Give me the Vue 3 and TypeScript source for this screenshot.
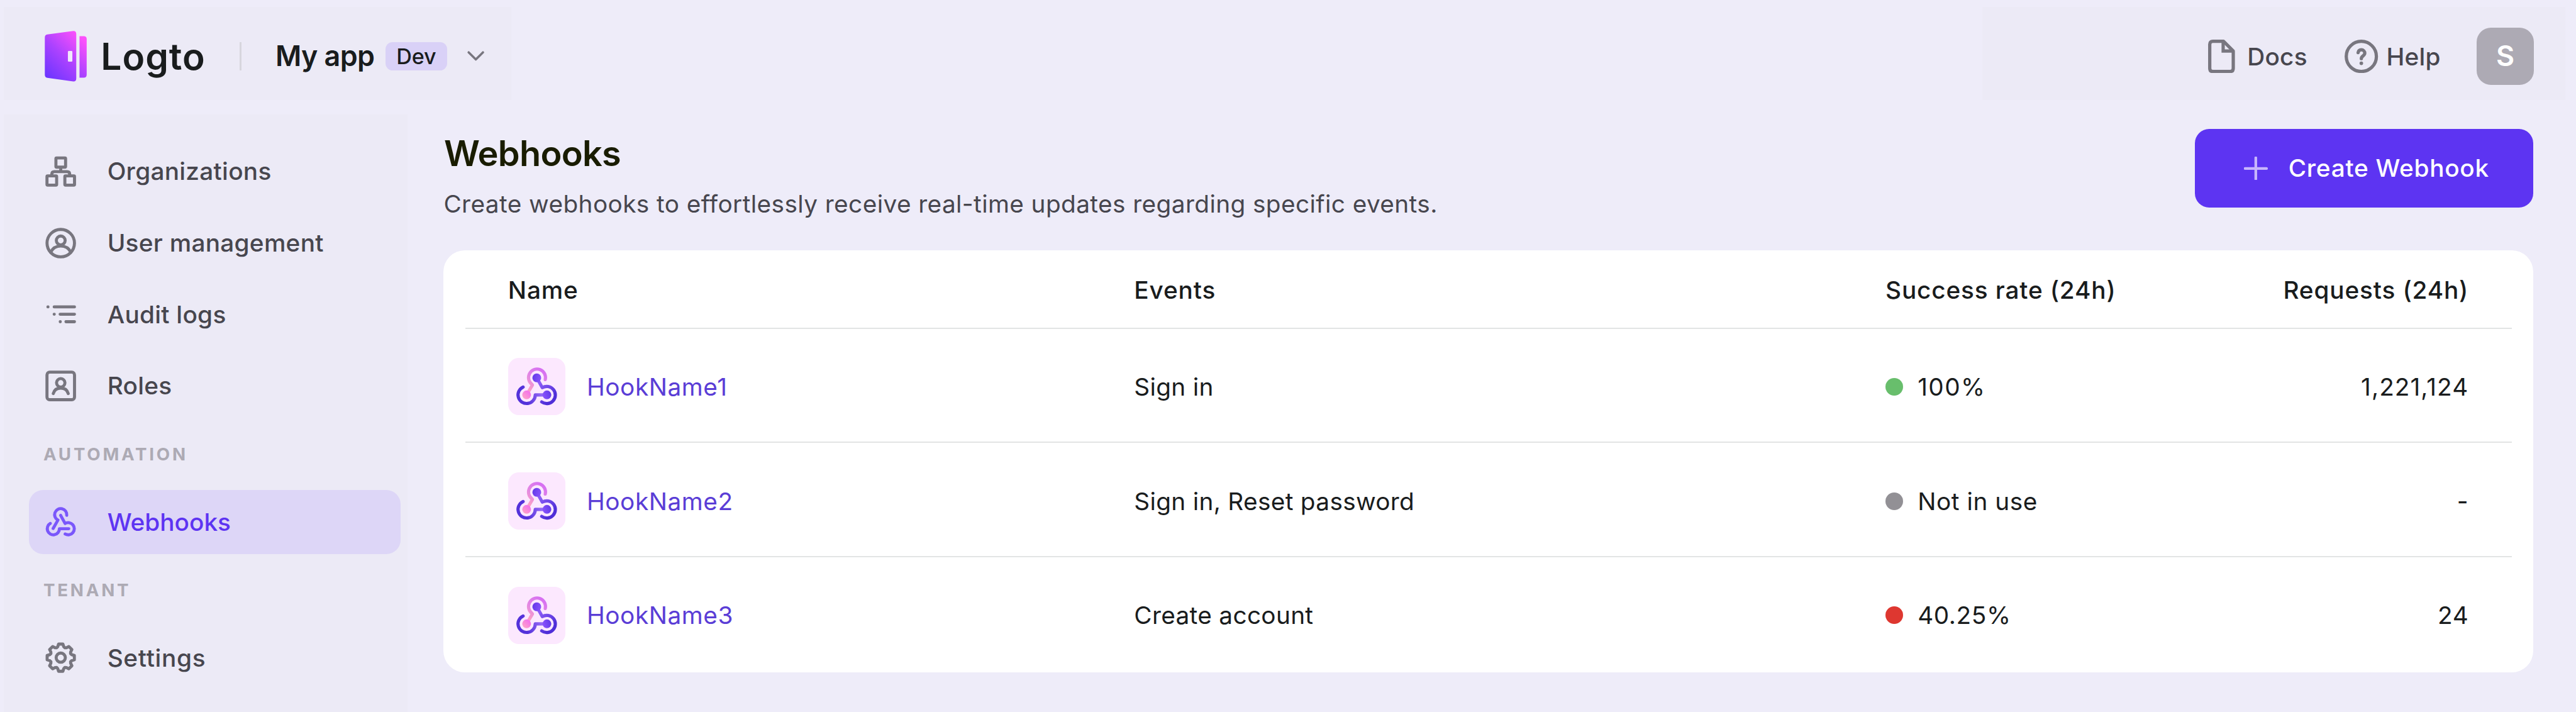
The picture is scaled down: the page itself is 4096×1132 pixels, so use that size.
<script setup lang="ts">
type IconName = 'org' | 'user' | 'logs' | 'role' | 'hook' | 'gear'

interface NavEntry {
  kind: 'item' | 'label'
  text: string
  icon?: IconName
  active?: boolean
  tone?: string
}

interface Hook {
  name: string
  events: string
  status: 'ok' | 'idle' | 'bad'
  rate: string
  requests: string
}

const nav: NavEntry[] = [
  { kind: 'item', text: 'Organizations', icon: 'org' },
  { kind: 'item', text: 'User management', icon: 'user' },
  { kind: 'item', text: 'Audit logs', icon: 'logs' },
  { kind: 'item', text: 'Roles', icon: 'role' },
  { kind: 'label', text: 'AUTOMATION' },
  { kind: 'item', text: 'Webhooks', icon: 'hook', active: true },
  { kind: 'label', text: 'TENANT' },
  { kind: 'item', text: 'Settings', icon: 'gear', tone: 'wide' },
]

const hooks: Hook[] = [
  { name: 'HookName1', events: 'Sign in', status: 'ok', rate: '100%', requests: '1,221,124' },
  { name: 'HookName2', events: 'Sign in, Reset password', status: 'idle', rate: 'Not in use', requests: '-' },
  { name: 'HookName3', events: 'Create account', status: 'bad', rate: '40.25%', requests: '24' },
]

// Eight-tooth gear outline around (36, 36)
const gearPath = (() => {
  const pts: string[] = []
  const at = (deg: number, r: number) => {
    const a = (deg * Math.PI) / 180
    pts.push(`${(36 + r * Math.cos(a)).toFixed(2)} ${(36 + r * Math.sin(a)).toFixed(2)}`)
  }
  for (let k = 0; k < 8; k++) {
    const c = k * 45
    at(c - 15, 25.6)
    at(c - 9, 30.8)
    at(c + 9, 30.8)
    at(c + 15, 25.6)
    at(c + 22.5, 23.8)
  }
  return `M${pts.join('L')}Z`
})()
</script>

<template>
  <div class="app">
    <header class="top">
      <div class="top-left">
        <svg class="logo" viewBox="0 0 95 114">
          <defs>
            <linearGradient id="logo-grad" gradientUnits="userSpaceOnUse" x1="6" y1="104" x2="88" y2="20">
              <stop offset="0" stop-color="#6d35ff" />
              <stop offset="0.5" stop-color="#ab42ff" />
              <stop offset="1" stop-color="#fc50fb" />
            </linearGradient>
          </defs>
          <path fill="url(#logo-grad)" d="M6 8.2 L64 .4 Q70.7 0 70.7 7 V106.500 Q70.700 113.800 64 113.200 L6 105 Q.4 104.300 .4 98 V15 Q.4 9 6 8.200Z" />
          <path fill="url(#logo-grad)" d="M78 12 H87.500 Q94 12 94 18.500 V98 Q94 104.700 87.500 104.700 H78Z" />
          <rect x="52" y="45" width="10" height="24" rx="2" fill="#f1e8fb" />
        </svg>
        <span class="brand">Logto</span>
        <i class="divider"></i>
        <span class="app-name">My app</span>
        <span class="badge">Dev</span>
        <svg class="chevron" viewBox="0 0 41 26">
          <path d="M4.500 4.500 L20.500 20.500 L36.500 4.500" fill="none" stroke="#78767f" stroke-width="5" stroke-linecap="round" stroke-linejoin="round" />
        </svg>
      </div>
      <div class="top-right">
        <div class="link docs">
          <svg class="doc-icon" viewBox="0 0 60 75" fill="none" stroke="#78767f" stroke-width="7.300" stroke-linejoin="round">
            <path d="M34.500 3.700 H10.700 Q3.700 3.700 3.700 10.700 V64.300 Q3.700 71.300 10.700 71.300 H49.300 Q56.300 71.300 56.300 64.300 V25.500 Z" />
            <path d="M33.700 3.700 V25.400 H56.300" stroke-linejoin="miter" />
          </svg>
          <span>Docs</span>
        </div>
        <div class="link help">
          <svg class="help-icon" viewBox="0 0 75 75" fill="none" stroke="#78767f" stroke-width="7.300" stroke-linecap="round">
            <circle cx="37.500" cy="37.500" r="33.700" />
            <path d="M30.300 29 C31 24.800 34 22.800 37.500 22.800 C42 22.800 45.200 26 45.200 30.300 C45.200 36.300 37.500 36.500 37.500 42.500" />
            <circle cx="37.500" cy="52.800" r="4" fill="#78767f" stroke="none" />
          </svg>
          <span>Help</span>
        </div>
        <div class="avatar">S</div>
      </div>
    </header>

    <div class="body">
      <nav class="side">
        <template v-for="n in nav" :key="n.text">
          <div v-if="n.kind === 'label'" class="side-label">{{ n.text }}</div>
          <div v-else class="side-item" :class="{ active: n.active }">
            <svg class="side-icon" viewBox="0 0 72 72" fill="none" stroke="currentColor" stroke-width="6.800" stroke-linecap="round" stroke-linejoin="round">
              <g v-if="n.icon === 'org'">
                <rect x="25.200" y="5.700" width="21.600" height="20.700" rx="1.500" />
                <rect x="5.200" y="45.900" width="21.600" height="20.700" rx="1.500" />
                <rect x="45.200" y="45.900" width="21.600" height="20.700" rx="1.500" />
                <path d="M36 28 V36 M16 45 V42 Q16 36.300 22 36.300 H50 Q56 36.300 56 42 V45" />
              </g>
              <g v-else-if="n.icon === 'user'">
                <circle cx="36" cy="36" r="30.700" />
                <circle cx="36" cy="30" r="9.900" />
                <path d="M13.500 56 C18.500 46.500 27 42.300 36 42.300 S53.500 46.500 58.500 56" />
              </g>
              <g v-else-if="n.icon === 'logs'">
                <path d="M21.300 19.600 H66.700 M34.600 36 H66.700 M47.600 52.800 H66.700 M7.300 19.600 H7.500 M21.300 36 H21.500 M34.800 52.800 H35" />
              </g>
              <g v-else-if="n.icon === 'role'">
                <rect x="5.200" y="5.200" width="61.600" height="61.600" rx="6" />
                <circle cx="36" cy="29" r="9.400" />
                <path d="M19.300 53 C21.500 44.800 28 40.800 36 40.800 S50.500 44.800 52.700 53" />
              </g>
              <g v-else-if="n.icon === 'hook'">
                <path d="M49.400 21.500 A13.600 13.600 0 1 0 29.700 32.200 L19 51" />
                <path d="M35.800 21.500 L45.800 39.800 A13.600 13.600 0 1 1 45.800 63.200" />
                <path d="M54 51.500 H33 A13.600 13.600 0 1 1 12.700 39.700" />
              </g>
              <g v-else>
                <path :d="gearPath" />
                <circle cx="36" cy="36" r="10.300" />
              </g>
            </svg>
            <span :class="n.tone">{{ n.text }}</span>
          </div>
        </template>
      </nav>

      <main class="content">
        <div class="head">
          <div>
            <h1>Webhooks</h1>
            <p>Create webhooks to effortlessly receive real-time updates regarding specific events.</p>
          </div>
          <button class="create">
            <svg class="plus" viewBox="0 0 53 53">
              <path d="M26.500 2.500 V50.500 M2.500 26.500 H50.500" stroke="#c8b6fc" stroke-width="6" stroke-linecap="round" />
            </svg>
            <span>Create Webhook</span>
          </button>
        </div>

        <section class="card">
          <div class="row header-row">
            <span>Name</span>
            <span>Events</span>
            <span>Success rate (24h)</span>
            <span class="num">Requests (24h)</span>
          </div>
          <div v-for="h in hooks" :key="h.name" class="row">
            <div class="name">
              <svg class="tile" viewBox="0 0 128 128" fill="none" stroke-width="7.200" stroke-linecap="round" stroke-linejoin="round">
                <defs>
                  <linearGradient id="hook-pink" gradientUnits="userSpaceOnUse" x1="80" y1="26" x2="44" y2="76">
                    <stop offset="0" stop-color="#d56df4" />
                    <stop offset="0.550" stop-color="#e58be0" />
                    <stop offset="1" stop-color="#ffa3c0" />
                  </linearGradient>
                  <linearGradient id="hook-right" gradientUnits="userSpaceOnUse" x1="68" y1="60" x2="98" y2="90">
                    <stop offset="0" stop-color="#8a5cf5" />
                    <stop offset="1" stop-color="#4f2ed8" />
                  </linearGradient>
                  <linearGradient id="hook-left" gradientUnits="userSpaceOnUse" x1="74" y1="80" x2="40" y2="92">
                    <stop offset="0" stop-color="#9468f5" />
                    <stop offset="1" stop-color="#5331da" />
                  </linearGradient>
                  <linearGradient id="node-a" x1="0" y1="0" x2="1" y2="0.300">
                    <stop offset="0" stop-color="#5f38e6" />
                    <stop offset="1" stop-color="#8650fb" />
                  </linearGradient>
                  <linearGradient id="node-b" x1="1" y1="0" x2="0" y2="1">
                    <stop offset="0" stop-color="#f265f6" />
                    <stop offset="1" stop-color="#ffaac0" />
                  </linearGradient>
                  <linearGradient id="node-c" x1="1" y1="0" x2="0" y2="0.300">
                    <stop offset="0" stop-color="#5f38e6" />
                    <stop offset="1" stop-color="#8650fb" />
                  </linearGradient>
                </defs>
                <rect width="128" height="128" rx="24" fill="#fce8fe" />
                <path stroke="url(#hook-pink)" d="M83 48.500 A19 19 0 1 0 53.500 59.500 L54.300 60.700 L41.300 82.700" />
                <path stroke="url(#hook-right)" d="M64 44.700 L76.300 66.600 A19.200 19.200 0 1 1 75 98.500" />
                <path stroke="url(#hook-left)" d="M86.700 82.800 H60.700 A19.300 19.300 0 1 1 33.500 65.100" />
                <circle cx="64" cy="44.700" r="9.800" fill="url(#node-a)" />
                <circle cx="41.300" cy="82.700" r="9.800" fill="url(#node-b)" />
                <circle cx="86.700" cy="82.700" r="9.800" fill="url(#node-c)" />
              </svg>
              <a>{{ h.name }}</a>
            </div>
            <span class="events">{{ h.events }}</span>
            <div class="rate" :class="h.status"><i></i><span>{{ h.rate }}</span></div>
            <span class="num" :class="{ long: h.requests.length > 2 }">{{ h.requests }}</span>
          </div>
        </section>
      </main>
    </div>
  </div>
</template>

<style>
html {
  font-size: 71.1111px;
}
body {
  margin: 0;
  background: #eeecf9;
}
</style>

<style scoped>
* {
  box-sizing: border-box;
}
.app {
  width: 57.6rem;
  height: 15.92rem;
  overflow: hidden;
  background: #eeecf9;
  font-family: Inter, "Liberation Sans", sans-serif;
  font-size: 0.545rem;
  line-height: 1.2;
  white-space: nowrap;
  color: #191c1d;
  display: flex;
  flex-direction: column;
}
.top {
  display: flex;
  justify-content: space-between;
  height: 2.4rem;
  padding: 0.16rem 0.24rem 0.16rem 0.08rem;
  flex: none;
}
.top-left,
.top-right {
  display: flex;
  align-items: center;
  padding-top: 0.12rem;
  background: #eceaf6;
}
.top-left {
  width: 11.35rem;
  padding-left: 0.92rem;
}
.top-left > * {
  flex: none;
}
.logo {
  width: 0.95rem;
  height: 1.14rem;
}
.brand {
  width: 3.1rem;
  margin-left: 0.304rem;
  padding-top: 0.01rem;
  font-size: 0.825rem;
  font-weight: 600;
  letter-spacing: 0.014rem;
}
.divider {
  width: 0.05rem;
  height: 0.64rem;
  background: #d7d6dd;
}
.app-name {
  width: 2.457rem;
  margin-left: 0.756rem;
  padding-top: 0.02rem;
  font-size: 0.63rem;
  font-weight: 600;
  letter-spacing: -0.008rem;
}
.badge {
  width: 1.38rem;
  height: 0.64rem;
  line-height: 0.65rem;
  border-radius: 0.16rem;
  background: #d9d1f7;
  text-align: center;
  font-size: 0.48rem;
  font-weight: 500;
  letter-spacing: -0.002rem;
}
.chevron {
  width: 0.41rem;
  height: 0.26rem;
  margin-left: 0.44rem;
}
.top-right {
  width: 13.03rem;
  padding-left: 5.05rem;
  color: #47464e;
  font-weight: 500;
}
.link {
  display: flex;
  align-items: center;
  flex: none;
  letter-spacing: 0.003rem;
}
.link span {
  padding-top: 0.01rem;
}
.docs {
  width: 3.05rem;
  gap: 0.27rem;
}
.help {
  width: 2.95rem;
  gap: 0.18rem;
}
.doc-icon {
  width: 0.6rem;
  height: 0.75rem;
}
.help-icon {
  width: 0.75rem;
  height: 0.75rem;
}
.avatar {
  flex: none;
  width: 1.28rem;
  height: 1.28rem;
  border-radius: 0.32rem;
  background: #adaab4;
  color: #fff;
  font-size: 0.63rem;
  font-weight: 600;
  padding-top: 0.02rem;
  display: flex;
  align-items: center;
  justify-content: center;
}
.body {
  display: flex;
  flex: 1;
  padding: 0.16rem 0.96rem 0 0.08rem;
}
.side {
  width: 9.03rem;
  padding: 0.55rem 0.15rem 0 0.56rem;
  background: #eceaf6;
  flex: none;
}
.side-item {
  display: flex;
  align-items: center;
  gap: 0.68rem;
  height: 1.44rem;
  padding-left: 0.36rem;
  border-radius: 0.32rem;
  color: #78767f;
  font-weight: 500;
}
.side-item + .side-item {
  margin-top: 0.16rem;
}
.side-item span {
  color: #47464e;
  letter-spacing: 0.004rem;
}
.side-item span.wide {
  letter-spacing: 0.01rem;
}
.side-item.active {
  background: #ddd6f7;
  color: #7a57fb;
}
.side-item.active span {
  color: #5d34f2;
  letter-spacing: 0;
}
.side-icon {
  width: 0.72rem;
  height: 0.72rem;
}
.side-label {
  height: 1.6rem;
  line-height: 1.62rem;
  padding-left: 0.33rem;
  font-size: 0.39rem;
  font-weight: 700;
  letter-spacing: 0.053rem;
  color: #adaab4;
}
.content {
  flex: 1;
  margin-left: 0.81rem;
  padding-top: 0.32rem;
}
.head {
  display: flex;
  justify-content: space-between;
  height: 2.72rem;
}
h1 {
  margin: 0;
  padding-left: 0.01rem;
  font-size: 0.785rem;
  font-weight: 600;
  line-height: 1.11rem;
  letter-spacing: -0.01rem;
  color: #191c00;
}
p {
  margin: 0.17rem 0 0;
  line-height: 0.8rem;
  color: #47464e;
  letter-spacing: 0.0057rem;
}
.create {
  display: flex;
  align-items: center;
  gap: 0.46rem;
  width: 7.56rem;
  height: 1.76rem;
  padding: 0 0 0 1.1rem;
  border: 0;
  border-radius: 0.32rem;
  background: #5d34f2;
  color: #fff;
  font: inherit;
  font-weight: 500;
  letter-spacing: 0.01rem;
}
.plus {
  width: 0.53rem;
  height: 0.53rem;
}
.card {
  height: 9.44rem;
  padding: 0 0.48rem;
  border-radius: 0.48rem;
  background: #fff;
}
.row {
  display: grid;
  grid-template-columns: 14rem 16.8rem 8rem 5.04rem;
  align-items: center;
  height: 2.56rem;
  padding: 0.08rem 0 0 0.96rem;
  border-bottom: 0.04rem solid #e2e4e4;
  letter-spacing: 0.008rem;
}
.header-row {
  height: 1.76rem;
  padding-top: 0.04rem;
  font-weight: 500;
  letter-spacing: 0.012rem;
}
.header-row + .row {
  height: 2.54rem;
  padding-top: 0.06rem;
}
.row:last-child {
  border-bottom: 0;
  padding-top: 0.03rem;
}
.events {
  letter-spacing: 0.0045rem;
}
.num {
  text-align: right;
}
.num.long {
  letter-spacing: 0.015rem;
}
.name {
  display: flex;
  align-items: center;
  gap: 0.48rem;
}
.name a {
  color: #5a3dd6;
}
.tile {
  width: 1.28rem;
  height: 1.28rem;
}
.rate {
  display: flex;
  align-items: center;
  gap: 0.32rem;
}
.rate i {
  width: 0.4rem;
  height: 0.4rem;
  border-radius: 50%;
}
.rate.ok {
  letter-spacing: 0.02rem;
}
.ok i {
  background: #68be6c;
}
.idle i {
  background: #929095;
}
.bad i {
  background: #de3730;
}
</style>
